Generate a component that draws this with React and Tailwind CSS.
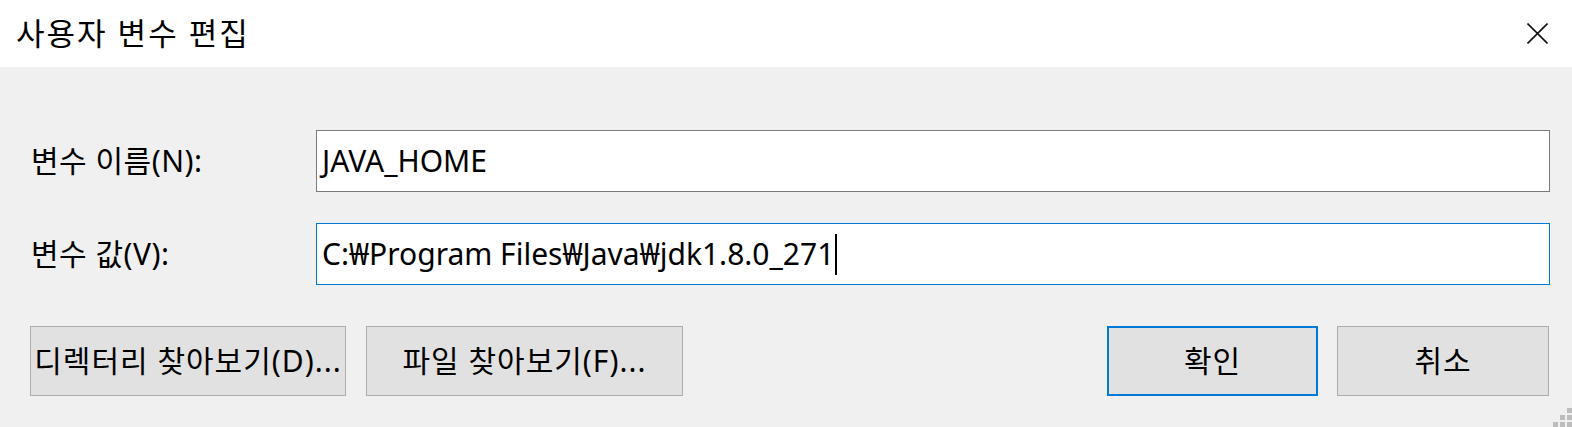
import React from 'react'

const font = { fontFamily: '"Noto Sans", "Noto Sans CJK KR", sans-serif' }

function Field({ label, value, focused }) {
  return (
    <div className="flex items-center">
      <div className="w-[285px] text-[30px] leading-none tracking-[0.5px] text-black">{label}</div>
      <div
        className={
          focused
            ? 'flex items-center w-[1234px] h-[62px] bg-white border border-[#0078d7] pl-[5px]'
            : 'flex items-center w-[1234px] h-[62px] bg-white border border-[#7a7a7a] pl-[5px]'
        }
      >
        <span className="text-[30px] leading-none text-black">{value}</span>
        {focused && <span className="ml-[1px] w-[2px] h-[41px] bg-black" />}
      </div>
    </div>
  )
}

function Button({ children, className }) {
  return (
    <button
      className={
        'h-[70px] bg-[#e1e1e1] text-[30px] leading-none text-black flex items-center justify-center whitespace-nowrap ' +
        className
      }
    >
      {children}
    </button>
  )
}

export default function App() {
  return (
    <div className="w-[1572px] h-[427px] bg-[#f0f0f0] flex flex-col relative overflow-hidden" style={font}>
      <div className="h-[67px] bg-white flex items-center justify-between pl-[16px] pr-[24px]">
        <span className="text-[31px] leading-none tracking-[2px] text-black">사용자 변수 편집</span>
        <svg width="21" height="21" viewBox="0 0 21 21">
          <path d="M0.5 0.5 L20.5 20.5 M20.5 0.5 L0.5 20.5" stroke="#111" strokeWidth="1.6" />
        </svg>
      </div>

      <div className="flex flex-col pl-[31px] pt-[63px]">
        <Field label="변수 이름(N):" value="JAVA_HOME" />
        <div className="h-[31px]" />
        <Field label="변수 값(V):" value="C:₩Program Files₩Java₩jdk1.8.0_271" focused />
      </div>

      <div className="flex items-center pl-[30px] pr-[23px] mt-[41px]">
        <Button className="w-[316px] border border-[#adadad] tracking-[1px]">디렉터리 찾아보기(D)...</Button>
        <Button className="w-[317px] ml-[20px] border border-[#adadad] tracking-[1px]">파일 찾아보기(F)...</Button>
        <div className="flex-1" />
        <Button className="w-[211px] border-2 border-[#0078d7] tracking-[1px]">확인</Button>
        <Button className="w-[212px] ml-[19px] border border-[#adadad] tracking-[1px]">취소</Button>
      </div>

      <div className="absolute right-0 bottom-0 grid grid-cols-3 gap-[2px]">
        <span className="w-[5px] h-[5px]" />
        <span className="w-[5px] h-[5px]" />
        <span className="w-[5px] h-[5px] bg-[#bdbdbd]" />
        <span className="w-[5px] h-[5px]" />
        <span className="w-[5px] h-[5px] bg-[#bdbdbd]" />
        <span className="w-[5px] h-[5px] bg-[#bdbdbd]" />
        <span className="w-[5px] h-[5px] bg-[#bdbdbd]" />
        <span className="w-[5px] h-[5px] bg-[#bdbdbd]" />
        <span className="w-[5px] h-[5px] bg-[#bdbdbd]" />
      </div>
    </div>
  )
}
